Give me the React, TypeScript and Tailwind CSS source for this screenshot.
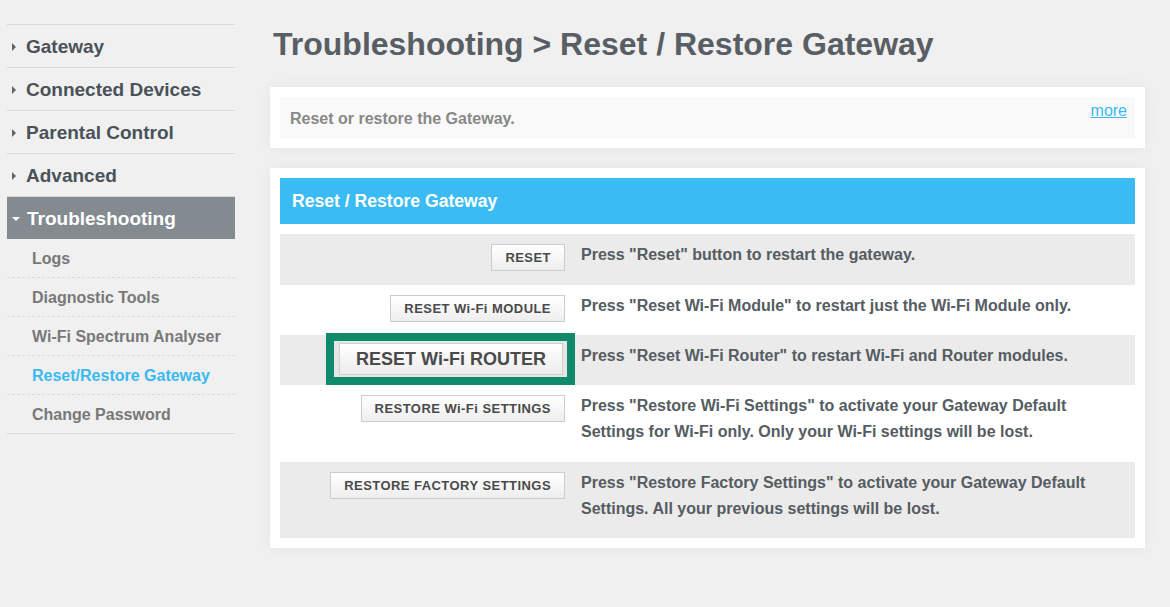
const font = { fontFamily: '"Liberation Sans", Arial, sans-serif' };

const menu = ["Gateway", "Connected Devices", "Parental Control", "Advanced"];
const subMenu = [
  "Logs",
  "Diagnostic Tools",
  "Wi-Fi Spectrum Analyser",
  "Reset/Restore Gateway",
  "Change Password",
];

function PlainButton({ label }: { label: string }) {
  return (
    <button
      type="button"
      className="h-[27px] border border-[#cccccc] bg-gradient-to-b from-white to-[#eeeeee] px-[13px] text-[13px] font-bold tracking-[0.45px] text-[#4a4a4a]"
    >
      {label}
    </button>
  );
}

const rows = [
  {
    label: "RESET",
    text: 'Press "Reset" button to restart the gateway.',
    h: "h-[51px]",
    bg: "bg-[#ebebeb]",
  },
  {
    label: "RESET Wi-Fi MODULE",
    text: 'Press "Reset Wi-Fi Module" to restart just the Wi-Fi Module only.',
    h: "h-[50px]",
    bg: "bg-white",
  },
  {
    label: "RESET Wi-Fi ROUTER",
    text: 'Press "Reset Wi-Fi Router" to restart Wi-Fi and Router modules.',
    h: "h-[50px]",
    bg: "bg-[#ebebeb]",
    highlight: true,
  },
  {
    label: "RESTORE Wi-Fi SETTINGS",
    text: 'Press "Restore Wi-Fi Settings" to activate your Gateway Default Settings for Wi-Fi only. Only your Wi-Fi settings will be lost.',
    h: "h-[77px]",
    bg: "bg-white",
  },
  {
    label: "RESTORE FACTORY SETTINGS",
    text: 'Press "Restore Factory Settings" to activate your Gateway Default Settings. All your previous settings will be lost.',
    h: "h-[76px]",
    bg: "bg-[#ebebeb]",
  },
];

export default function App() {
  return (
    <div style={font} className="flex h-[607px] w-full overflow-hidden bg-[#f0f0f0]">
      <aside className="ml-[7px] w-[228px] shrink-0 pt-[24px]">
        <ul className="border-t border-[#d9d9d9]">
          {menu.map((item) => (
            <li
              key={item}
              className="flex h-[43px] items-center border-b border-[#d9d9d9] pt-[2px] text-[19px] font-bold text-[#4a5258]"
            >
              <span className="ml-[5px] mr-[10px] h-0 w-0 border-y-[4px] border-l-[4px] border-y-transparent border-l-[#5f666b]" />
              {item}
            </li>
          ))}
          <li className="flex h-[42px] items-center bg-[#838b91] pt-[2px] text-[19px] font-bold text-white">
            <span className="ml-[5px] mr-[7px] h-0 w-0 border-x-[4px] border-t-[4px] border-x-transparent border-t-white" />
            Troubleshooting
          </li>
          {subMenu.map((item, i) => (
            <li
              key={item}
              className={`flex h-[39px] items-center pl-[25px] pt-[2px] text-[16px] font-bold ${
                i === subMenu.length - 1
                  ? "border-b border-solid border-[#d9d9d9]"
                  : "border-b border-dashed border-[#dddddd]"
              } ${item === "Reset/Restore Gateway" ? "text-[#3bb9f0]" : "text-[#787878]"}`}
            >
              {item}
            </li>
          ))}
        </ul>
      </aside>

      <main className="ml-[35px] w-[875px] shrink-0">
        <h1 className="mt-[26px] h-[36px] pl-[3px] text-[32px] font-bold leading-[36px] text-[#585e64]">
          Troubleshooting &gt; Reset / Restore Gateway
        </h1>

        <section className="mt-[25px] bg-white p-[10px] pb-[9px] shadow-[0_0_14px_rgba(0,0,0,0.05)]">
          <div className="flex h-[42px] justify-between bg-[#f9f9f9] pl-[10px] pr-[8px]">
            <p className="self-center pt-[1px] text-[16px] font-bold text-[#888888]">
              Reset or restore the Gateway.
            </p>
            <a href="#" className="mt-[2px] self-start text-[16px] text-[#3bb9f0] underline">
              more
            </a>
          </div>
        </section>

        <section className="mt-[20px] bg-white p-[10px] shadow-[0_0_14px_rgba(0,0,0,0.05)]">
          <div className="flex h-[46px] items-center bg-[#3bbbf3] pl-[12px] text-[17.6px] font-bold text-white">
            Reset / Restore Gateway
          </div>
          <div className="mt-[10px]">
            {rows.map((row) => (
              <div key={row.label} className={`relative flex ${row.h} ${row.bg}`}>
                <div className="flex w-[285px] shrink-0 items-start justify-end pt-[10px]">
                  {row.highlight ? (
                    <div className="absolute left-[46px] top-[-2px] z-10 h-[52px] w-[249px] border-[8px] border-[#0f8a6b] bg-[#e6e6e6] pb-[2px] pl-[5px] pr-[4px] pt-[2px]">
                      <button
                        type="button"
                        className="h-full w-full border border-[#cfcfcf] bg-gradient-to-b from-white to-[#ececec] text-[18px] font-bold text-[#4a4a4a]"
                      >
                        {row.label}
                      </button>
                    </div>
                  ) : (
                    <PlainButton label={row.label} />
                  )}
                </div>
                <p className="pl-[16px] pr-[30px] pt-[8px] text-[16px] font-bold leading-[26px] text-[#555c62]">
                  {row.text}
                </p>
              </div>
            ))}
          </div>
        </section>
      </main>
    </div>
  );
}
